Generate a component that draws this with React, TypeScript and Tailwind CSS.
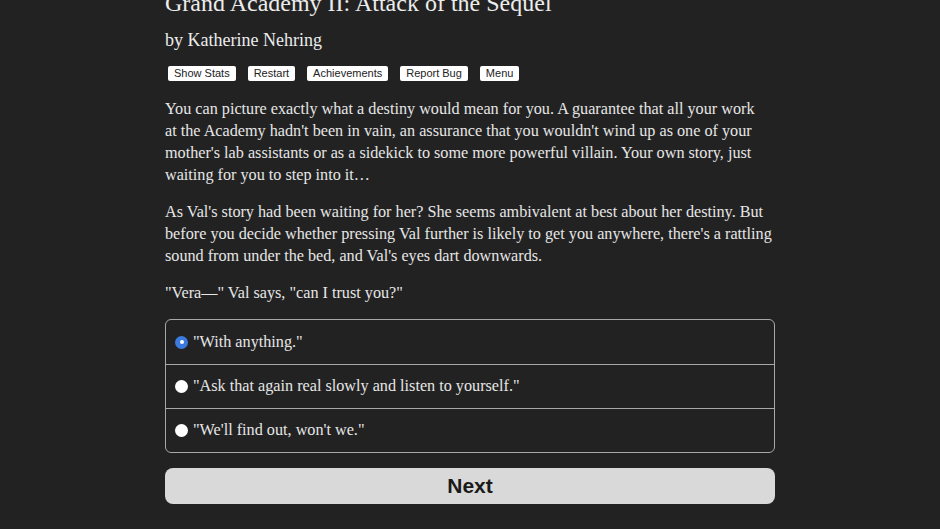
import React from "react";

const choices = [
  { id: "a", text: "\"With anything.\"", checked: true },
  { id: "b", text: "\"Ask that again real slowly and listen to yourself.\"", checked: false },
  { id: "c", text: "\"We'll find out, won't we.\"", checked: false },
];

const buttons = ["Show Stats", "Restart", "Achievements", "Report Bug", "Menu"];

export default function App() {
  return (
    <div className="min-h-[529px] h-[529px] overflow-hidden bg-[#222222] text-[#e6e6e6] font-['Liberation_Serif',serif]">
      <div className="mx-auto w-[610px] -mt-[12px]">
        {/* Header */}
        <h1 className="text-[24px] leading-[30px] text-[#ececec]">Grand Academy II: Attack of the Sequel</h1>
        <h2 className="mt-[11px] text-[18px] leading-[22px] text-[#ececec]">by Katherine Nehring</h2>

        <div className="mt-[15px] flex gap-[12px] pl-[3px] font-['Liberation_Sans',sans-serif]">
          {buttons.map((b) => (
            <button
              key={b}
              className="h-[15px] px-[6px] bg-white text-[#222] text-[11px] leading-[15px] rounded-[2px]"
            >
              {b}
            </button>
          ))}
        </div>

        {/* Story text */}
        <div className="mt-[17px] space-y-[15px] text-[16.2px] leading-[22px]">
          <p>
            You can picture exactly what a destiny would mean for you. A guarantee that all your work
            <br />
            at the Academy hadn't been in vain, an assurance that you wouldn't wind up as one of your mother's
            lab assistants or as a sidekick to some more powerful villain. Your own story, just waiting for you
            to step into it…
          </p>
          <p>
            As Val's story had been waiting for her? She seems ambivalent at best about her destiny. But before
            you decide whether pressing Val further is likely to get you anywhere, there's a rattling sound from
            under the bed, and Val's eyes dart downwards.
          </p>
          <p>"Vera—" Val says, "can I trust you?"</p>
        </div>

        {/* Choices */}
        <div className="mt-[15px] border border-[#a8a8a8] rounded-[6px] overflow-hidden">
          {choices.map((c, i) => (
            <label
              key={c.id}
              className={`flex items-center h-[44px] pl-[9px] gap-[5px] text-[16.2px] ${
                i > 0 ? "border-t border-[#a8a8a8]" : ""
              }`}
            >
              {c.checked ? (
                <span className="w-[13px] h-[13px] rounded-full bg-[#3b7be0] flex items-center justify-center">
                  <span className="w-[4px] h-[4px] rounded-full bg-white" />
                </span>
              ) : (
                <span className="w-[13px] h-[13px] rounded-full bg-white" />
              )}
              <span>{c.text}</span>
            </label>
          ))}
        </div>

        <button className="mt-[15px] w-full h-[36px] rounded-[8px] bg-[#d9d9d9] text-[#1a1a1a] font-['Liberation_Sans',sans-serif] font-bold text-[21px]">
          Next
        </button>
      </div>
    </div>
  );
}
